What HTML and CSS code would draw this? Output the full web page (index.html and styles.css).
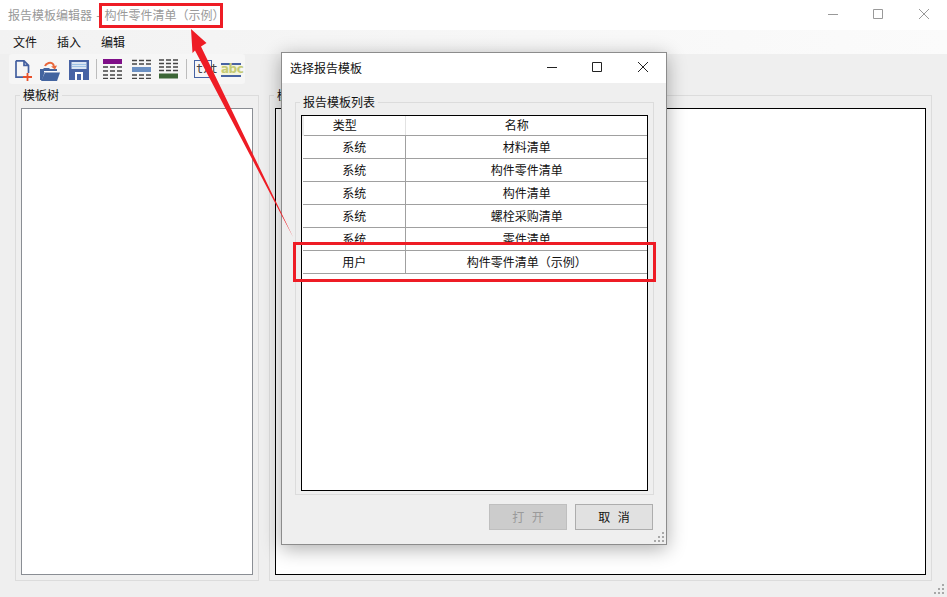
FILE: index.html
```html
<!DOCTYPE html>
<html lang="zh-CN">
<head>
<meta charset="utf-8">
<title>报告模板编辑器</title>
<link rel="stylesheet" href="styles.css">
</head>
<body>
<div class="app">
  <header class="titlebar">
    <span class="title-text">报告模板编辑器 - 构件零件清单（示例）</span>
    <div class="winctl main-ctl">
      <svg class="ctl" width="46" height="30" viewBox="0 0 46 30"><path d="M19 14.500h10" /></svg>
      <svg class="ctl" width="46" height="30" viewBox="0 0 46 30"><path d="M18.500 9.500h9v9h-9z" /></svg>
      <svg class="ctl" width="46" height="30" viewBox="0 0 46 30"><path d="M18 9l10 10M28 9L18 19" /></svg>
    </div>
  </header>
  <nav class="menubar">
    <span>文件</span><span>插入</span><span>编辑</span>
  </nav>
  <div class="toolstrip">
    <div class="tools">
      <svg class="ic ic-new" width="18" height="21" viewBox="0 0 18 21">
        <path d="M1 .85h8l4.500 4.500v7.650M8 17.150H1V.85M9 .85v4.500h4.500" fill="none" stroke="#4460a0" stroke-width="1.700"/>
        <path d="M12.500 13v8M8 17h9" stroke="#e8512c" stroke-width="1.800" fill="none"/>
      </svg>
      <svg class="ic ic-open" width="20" height="20" viewBox="0 0 20 20">
        <path d="M0 19V8h3l1-1h5l1 1h7v2H5L2 19z" fill="#43649f"/>
        <path d="M1 20l4-8.500h15L17 20z" fill="#43649f"/>
        <path d="M4 10.500h13" stroke="#fff" stroke-width="1"/>
        <path d="M5 5c1-3 6-4.500 8-2l1 2" fill="none" stroke="#e9673b" stroke-width="2"/>
        <path d="M11 5.500l6-1-2 4z" fill="#e9673b"/>
      </svg>
      <svg class="ic ic-save" width="22" height="22" viewBox="0 0 22 22">
        <path d="M1 1h20v20H1z" fill="#4763a4"/>
        <path d="M3.500 3h15v7h-15z" fill="#dbe6f3"/>
        <path d="M4 5.500h14M4 7.500h14" stroke="#9ec3e6" stroke-width="1"/>
        <path d="M7 13h8v8H7z" fill="#fff"/>
        <path d="M9 15h4v6H9z" fill="#4763a4"/>
      </svg>
      <i class="tool-sep sep-a"></i>
      <svg class="ic ic-t1" width="20" height="20" viewBox="0 0 20 20"><path d="M1 0h19v5H1z" fill="#7f0f88"/><path d="M1 8h5M8 8h5M15 8h5M1 12h5M8 12h5M15 12h5M1 16h5M8 16h5M15 16h5M1 19.500h5M8 19.500h5M15 19.500h5" stroke="#444" stroke-width="1.700" fill="none"/></svg>
      <svg class="ic ic-t2" width="20" height="20" viewBox="0 0 20 20"><path d="M1 1.500h5M8 1.500h5M15 1.500h5M1 5h5M8 5h5M15 5h5M1 16h5M8 16h5M15 16h5M1 19.500h5M8 19.500h5M15 19.500h5" stroke="#444" stroke-width="1.700" fill="none"/><path d="M1 8h19v5H1z" fill="#6b90c3"/></svg>
      <svg class="ic ic-t3" width="20" height="20" viewBox="0 0 20 20"><path d="M1 1h5M8 1h5M15 1h5M1 4.500h5M8 4.500h5M15 4.500h5M1 8h5M8 8h5M15 8h5M1 11.500h5M8 11.500h5M15 11.500h5" stroke="#444" stroke-width="1.700" fill="none"/><path d="M1 14.500h19v5H1z" fill="#3c6636"/></svg>
      <i class="tool-sep sep-b"></i>
      <span class="txt-ic">txt</span>
      <span class="abc-ic">abc</span>
    </div>
  </div>
  <main class="workspace">
    <fieldset class="group group-tree">
      <legend>模板树</legend>
      <div class="pane pane-gray"></div>
    </fieldset>
    <fieldset class="group group-main">
      <legend>模板</legend>
      <div class="pane pane-black"></div>
    </fieldset>
  </main>
  <svg class="grip grip-main" width="11" height="11" viewBox="0 0 11 11"><path d="M8 0h2v2H8zM4 4h2v2H4zM8 4h2v2H8zM0 8h2v2H0zM4 8h2v2H4zM8 8h2v2H8z"/></svg>

  <section class="dialog">
    <header class="dlg-title">
      <span class="dlg-name">选择报告模板</span>
      <div class="winctl dlg-ctl">
        <svg class="ctl" width="46" height="30" viewBox="0 0 46 30"><path d="M19 14.500h10" /></svg>
        <svg class="ctl" width="46" height="30" viewBox="0 0 46 30"><path d="M18.500 9.500h9v9h-9z" /></svg>
        <svg class="ctl" width="46" height="30" viewBox="0 0 46 30"><path d="M18 9l10 10M28 9L18 19" /></svg>
      </div>
    </header>
    <div class="dlg-body">
      <fieldset class="group group-list">
        <legend>报告模板列表</legend>
        <div class="table-box">
          <table class="tpl-table">
            <thead><tr><th class="col-type">类型</th><th>名称</th></tr></thead>
            <tbody>
              <tr><td>系统</td><td>材料清单</td></tr>
              <tr><td>系统</td><td>构件零件清单</td></tr>
              <tr><td>系统</td><td>构件清单</td></tr>
              <tr><td>系统</td><td>螺栓采购清单</td></tr>
              <tr><td>系统</td><td>零件清单</td></tr>
              <tr><td>用户</td><td>构件零件清单（示例）</td></tr>
            </tbody>
          </table>
        </div>
      </fieldset>
      <div class="dlg-actions">
        <button class="btn" disabled>打 开</button>
        <button class="btn btn-cancel">取 消</button>
      </div>
    </div>
    <svg class="grip grip-dlg" width="11" height="11" viewBox="0 0 11 11"><path d="M8 0h2v2H8zM4 4h2v2H4zM8 4h2v2H8zM0 8h2v2H0zM4 8h2v2H4zM8 8h2v2H8z"/></svg>
  </section>

  <svg class="annotation" width="947" height="597" viewBox="0 0 947 597">
    <rect x="100.500" y="4.500" width="121" height="22" fill="none" stroke="#ee1c25" stroke-width="3"/>
    <rect x="294.500" y="243.500" width="360" height="37" fill="none" stroke="#ee1c25" stroke-width="3"/>
    <path d="M191 29L206.500 43 201 46.500 293 237 195 50.500 192.500 53z" fill="#ee1c25"/>
  </svg>
</div>
</body>
</html>
```

FILE: styles.css
```css
* { box-sizing: border-box; }
html, body { margin: 0; padding: 0; }
body {
  font-family: "Noto Sans CJK SC", "Liberation Sans", sans-serif;
  font-size: 12px;
  color: #111;
  background: #efefef;
}
.app {
  position: relative;
  width: 947px;
  height: 597px;
  overflow: hidden;
  display: flex;
  flex-direction: column;
  background: #efefef;
}
.titlebar {
  height: 30px;
  flex: none;
  background: #fff;
  display: flex;
  align-items: center;
  justify-content: space-between;
  padding-left: 8px;
  color: #999;
}
.title-text { line-height: 30px; word-spacing: 1.500px; }
.winctl { display: flex; }
.ctl { display: block; fill: none; stroke-width: 1; }
.main-ctl .ctl { stroke: #999; }
.dlg-ctl .ctl { stroke: #222; }
.menubar {
  height: 24px;
  flex: none;
  display: flex;
  gap: 20px;
  align-items: center;
  padding: 0 0 2px 13px;
  background: linear-gradient(to right, #f2f2f2, #fbfbfb);
  color: #111;
}
.toolstrip { height: 31px; flex: none; padding-left: 9px; }
.tools {
  position: relative;
  width: 236px;
  height: 30px;
  background: #f6f6f6;
  border-radius: 3px;
  display: flex;
  align-items: center;
  padding-left: 5px;
}
.ic { display: block; flex: none; }
.ic-new { margin-left: 1px; margin-top: 3px; }
.ic-open { margin-left: 7px; margin-top: 3px; }
.ic-save { margin-left: 8px; margin-top: 2px; }
.tool-sep { display: block; width: 1px; height: 20px; background: #bcbcbc; flex: none; }
.sep-a { margin-left: 6px; }
.ic-t1 { margin-left: 5px; }
.ic-t2 { margin-left: 9px; }
.ic-t3 { margin-left: 7px; }
.sep-b { margin-left: 8px; }
.txt-ic {
  margin-left: 7px;
  width: 18px;
  height: 18px;
  border: 1px solid #4763a4;
  padding-left: 1px;
  font: 12px/16px "DejaVu Sans Mono", monospace;
  color: #444;
  white-space: nowrap;
}
.abc-ic {
  margin: 2px 0 0 9px;
  width: 20px;
  height: 14px;
  border-top: 2px solid #4763a4;
  border-bottom: 2px solid #4763a4;
  background: #f4f4dc;
  font: bold 12px/9px "DejaVu Sans", sans-serif;
  color: #c4ca74;
  text-align: center;
  letter-spacing: -.5px;
}
.workspace {
  flex: 1;
  min-height: 0;
  display: flex;
  gap: 10px;
  padding: 2px 0 16px 15px;
}
.group {
  margin: 0;
  min-width: 0;
  border: 1px solid #dcdcdc;
  padding: 5px;
  display: flex;
  flex-direction: column;
}
.group legend {
  margin-left: -1px;
  padding: 0 3px;
  line-height: 16px;
  color: #111;
}
.group-tree { width: 244px; }
.group-main { width: 663px; }
.pane { flex: 1; background: #fff; }
.pane-gray { border: 1px solid #8a8e94; }
.pane-black { border: 1px solid #000; }
.grip { display: block; fill: #a8a8a8; }
.grip-main { position: absolute; right: 2px; bottom: 2px; }
.dialog {
  position: absolute;
  left: 281px;
  top: 52px;
  width: 386px;
  height: 493px;
  background: #efefef;
  border: 1px solid #8c8c8c;
  box-shadow: 0 4px 18px rgba(0, 0, 0, .32);
  display: flex;
  flex-direction: column;
}
.dlg-title {
  height: 30px;
  flex: none;
  background: #fff;
  display: flex;
  align-items: center;
  justify-content: space-between;
  padding-left: 8px;
}
.dlg-name { padding-bottom: 2px; }
.dlg-body {
  flex: 1;
  min-height: 0;
  display: flex;
  flex-direction: column;
  padding: 11px 12px 13px 13px;
}
.group-list { height: 401px; padding: 5px 5px 3px; flex: none; }
.table-box { height: 376px; flex: none; border: 1px solid #000; background: #fff; }
.tpl-table {
  width: 345px;
  border-collapse: collapse;
  table-layout: fixed;
  font-size: 12px;
}
.tpl-table th, .tpl-table td {
  padding: 0 0 1px 1px;
  text-align: center;
  font-weight: 400;
  height: 23px;
  border-bottom: 1px solid #a0a0a0;
  line-height: 19px;
}
.tpl-table th {
  height: 19px;
  padding: 0 19px 0 0;
  line-height: 18px;
  background: #fff;
}
.tpl-table th.col-type { width: 102px; border-right: 1px solid #e2e2e2; border-left: 2px solid #ececec; }
.tpl-table td:first-child { border-right: 1px solid #a0a0a0; }
.dlg-actions {
  display: flex;
  justify-content: flex-end;
  gap: 8px;
  margin: 9px 1px 0 0;
}
.btn {
  width: 78px;
  height: 26px;
  padding: 0;
  font: 12px/24px "Noto Sans CJK SC", sans-serif;
  background: #e1e1e1;
  border: 1px solid #adadad;
  color: #111;
  white-space: pre;
  word-spacing: 5px;
}
.btn:disabled { background: #cccccc; border-color: #bfbfbf; color: #9a9a9a; }
.grip-dlg { position: absolute; right: 1px; bottom: 1px; }
.annotation { position: absolute; left: 0; top: 0; pointer-events: none; }
```
